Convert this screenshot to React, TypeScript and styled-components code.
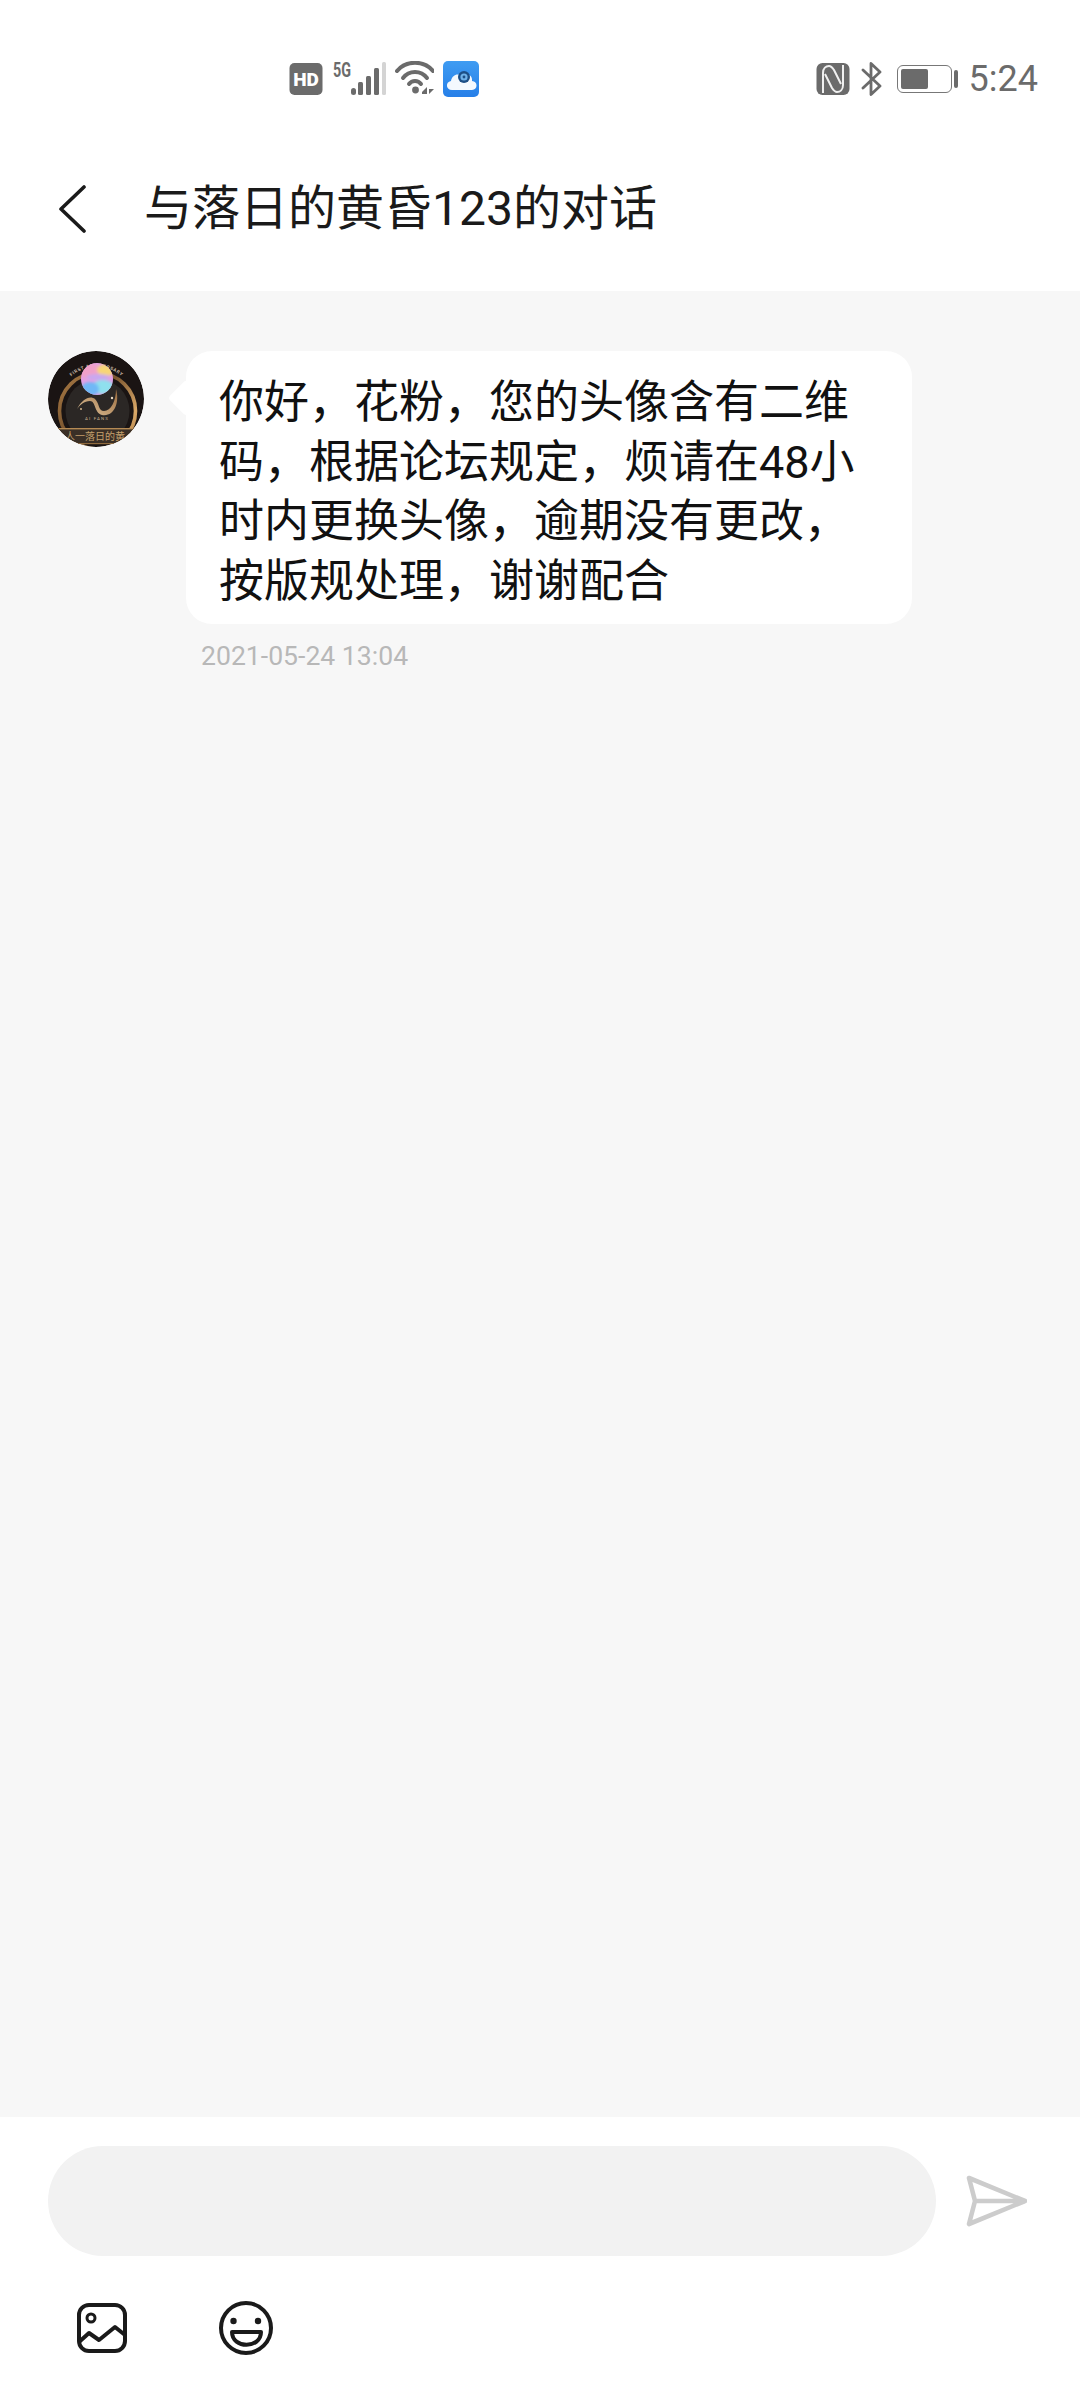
import React from 'react';
import styled, { createGlobalStyle } from 'styled-components';

const GlobalStyle = createGlobalStyle`
  html, body {
    margin: 0;
    padding: 0;
    background: #ffffff;
  }
  * {
    box-sizing: border-box;
  }
`;

const FONT = `Roboto, "Noto Sans CJK SC", sans-serif`;
const GREY = '#6b6b6b';
const INK = '#1a1a1a';

const App: React.FC = () => {
  return (
    <Screen>
      <GlobalStyle />
      <StatusBar>
        <StatusLeft>
          <svg width="34" height="34" viewBox="0 0 34 34">
            <rect x="0.5" y="1" width="33" height="32" rx="5" fill={GREY} />
            <text x="17" y="24" textAnchor="middle" fontFamily="Roboto, sans-serif" fontWeight="900" fontSize="19" fill="#fff">HD</text>
          </svg>
          <SignalIcon width="54" height="40" viewBox="0 -6 54 40">
            <text x="1" y="14.5" fontFamily="Roboto, sans-serif" fontWeight="700" fontSize="20" textLength="18" lengthAdjust="spacingAndGlyphs" fill={GREY}>5G</text>
            <rect x="19" y="26" width="5" height="7" rx="2.5" fill={GREY} />
            <rect x="26" y="20" width="5" height="13" rx="1.5" fill={GREY} />
            <rect x="34" y="14" width="5" height="19" rx="1.5" fill={GREY} />
            <rect x="42" y="6" width="5" height="27" rx="1.5" fill={GREY} />
            <rect x="50" y="0" width="4" height="33" rx="1.5" fill="#d4d4d4" />
          </SignalIcon>
          <svg width="39" height="36" viewBox="0 0 39 36">
            <g fill="none" stroke={GREY} strokeWidth="4" strokeLinecap="round">
              <path d="M2 10 C11 -1 29 -1 38 10" />
              <path d="M8 17 C14 9 26 9 32 17" />
              <path d="M14 23 C17 19 23 19 26 23" />
            </g>
            <circle cx="20.5" cy="29" r="3.4" fill={GREY} />
            <path d="M27 31 L32 26 V33 H27 Z" fill={GREY} />
            <path d="M34 25 V33 L39 28 H34 Z" fill={GREY} />
          </svg>
          <CloudIcon width="36" height="36" viewBox="0 0 36 36">
            <defs>
              <linearGradient id="cloudBg" x1="0" y1="0" x2="0" y2="1">
                <stop offset="0" stopColor="#3f9cf2" />
                <stop offset="1" stopColor="#267fe8" />
              </linearGradient>
            </defs>
            <rect width="36" height="36" rx="5" fill="url(#cloudBg)" />
            <path d="M9 29 C3 29 2 21 8 20 C9 14 15 12 18 15 C23 11 30 14 29 20 C35 20 35 29 29 29 Z" fill="#f4f9fe" />
            <circle cx="21" cy="16" r="6" fill="#1d4f86" />
            <circle cx="21" cy="16" r="3.6" fill="#6fb1e8" />
            <circle cx="21" cy="16" r="1.4" fill="#1d4f86" />
          </CloudIcon>
        </StatusLeft>
        <StatusRight>
          <svg width="34" height="34" viewBox="0 0 34 34">
            <rect x="0.5" y="1" width="33" height="32" rx="6" fill={GREY} />
            <g fill="none" stroke="#f0f0f0" strokeWidth="2" strokeLinejoin="round">
              <path d="M7 31 V11 C7 6 10 4 13 4 C15 4 16 5 18 8 L25 22" />
              <path d="M27 3 V23 C27 28 24 30 21 30 C19 30 18 29 16 26 L9 12" />
            </g>
          </svg>
          <BluetoothIcon width="22" height="34" viewBox="0 0 22 34">
            <path d="M2 8 L19 24 L10 32.5 V1.5 L19 10 L2 26" fill="none" stroke={GREY} strokeWidth="2.8" strokeLinecap="round" strokeLinejoin="round" />
          </BluetoothIcon>
          <BatteryWrap>
            <BatteryBody>
              <BatteryFill $percent={59} />
            </BatteryBody>
            <BatteryCap />
          </BatteryWrap>
          <Clock>5:24</Clock>
        </StatusRight>
      </StatusBar>

      <Header>
        <BackButton>
          <svg width="32" height="48" viewBox="0 0 32 48">
            <path d="M27 2 L4 24 L27 46" fill="none" stroke={INK} strokeWidth="3.6" strokeLinecap="round" strokeLinejoin="round" />
          </svg>
        </BackButton>
        <Title>与落日的黄昏123的对话</Title>
      </Header>

      <Conversation>
        <MessageRow>
          <Avatar>
            <svg width="96" height="96" viewBox="0 0 96 96">
              <defs>
                <clipPath id="avatarClip">
                  <circle cx="48" cy="48" r="48" />
                </clipPath>
                <clipPath id="ballClip">
                  <circle cx="49" cy="28" r="16" />
                </clipPath>
                <filter id="soft" x="-30%" y="-30%" width="160%" height="160%">
                  <feGaussianBlur stdDeviation="1.6" />
                </filter>
                <linearGradient id="ring" x1="0" y1="0" x2="1" y2="1">
                  <stop offset="0" stopColor="#a97a44" />
                  <stop offset="0.4" stopColor="#7d5730" />
                  <stop offset="0.75" stopColor="#d9a868" />
                  <stop offset="1" stopColor="#a4743e" />
                </linearGradient>
                <linearGradient id="swoosh" x1="0" y1="1" x2="1" y2="0">
                  <stop offset="0" stopColor="#e0c49c" />
                  <stop offset="1" stopColor="#9a6a3c" />
                </linearGradient>
                <path id="arcText" d="M15 36 A38 38 0 0 1 82 36" />
              </defs>
              <g clipPath="url(#avatarClip)">
                <rect width="96" height="96" fill="#1a1413" />
                <circle cx="49.5" cy="60" r="32" fill="#2b2725" />
                <circle cx="49.5" cy="60" r="38" fill="none" stroke="url(#ring)" strokeWidth="3.6" />
                <text fontFamily="Roboto, sans-serif" fontSize="4.6" fontWeight="700" letterSpacing="0.6" fill="#c9b8a4">
                  <textPath href="#arcText" startOffset="50%" textAnchor="middle">FIRST ANNIVERSARY</textPath>
                </text>
                <path d="M29 58 C34 48 42 44 47 48 C52 53 50 60 56 60 C63 60 68 50 68 38 C72 52 66 66 54 64 C46 62 48 50 42 50 C36 50 32 54 29 58 Z" fill="url(#swoosh)" />
                <circle cx="33" cy="58" r="1" fill="#d8b88c" />
                <circle cx="64" cy="47" r="1.2" fill="#e8d8c0" />
                <text x="49" y="69" textAnchor="middle" fontFamily="Roboto, sans-serif" fontSize="4.4" letterSpacing="1.2" fill="#c8b090">AI FANS</text>
                <rect x="6" y="77" width="80" height="16" fill="#3a2f26" />
                <rect x="6" y="77" width="80" height="1.4" fill="#b58a54" />
                <rect x="6" y="92" width="80" height="1.2" fill="#8f6a3e" />
                <text x="47" y="89" textAnchor="middle" fontFamily='"Noto Sans CJK SC", sans-serif' fontSize="10" fill="#c4a06c">人一落日的黄</text>
                <g clipPath="url(#ballClip)">
                  <rect x="30" y="10" width="38" height="36" fill="#e4a0e4" />
                  <g filter="url(#soft)">
                    <ellipse cx="42" cy="20" rx="10" ry="8" fill="#f0a0c8" />
                    <ellipse cx="58" cy="19" rx="9" ry="6" fill="#f8d676" />
                    <ellipse cx="50" cy="26" rx="12" ry="3" fill="#c8a8f0" />
                    <ellipse cx="55" cy="36" rx="11" ry="7" fill="#8fe0ee" />
                    <ellipse cx="42" cy="38" rx="9" ry="7" fill="#70b8f6" />
                  </g>
                </g>
              </g>
            </svg>
          </Avatar>
          <MessageColumn>
            <Bubble>你好，花粉，您的头像含有二维码，根据论坛规定，烦请在48小时内更换头像，逾期没有更改，按版规处理，谢谢配合</Bubble>
            <Timestamp>2021-05-24 13:04</Timestamp>
          </MessageColumn>
        </MessageRow>
      </Conversation>

      <Footer>
        <InputRow>
          <MessageInput />
          <svg width="62" height="52" viewBox="0 0 62 52">
            <path d="M4 3 L60 26 L4 49 L10 26 Z M10 26 H60" fill="none" stroke="#cccccc" strokeWidth="4.6" strokeLinejoin="round" strokeLinecap="round" />
          </svg>
        </InputRow>
        <ToolRow>
          <svg width="52" height="52" viewBox="0 0 52 52">
            <rect x="3" y="3" width="46" height="46" rx="10" fill="none" stroke={INK} strokeWidth="4" />
            <circle cx="15" cy="16" r="4" fill="none" stroke={INK} strokeWidth="3" />
            <path d="M3 40 L13 31 L23 38 L39 25 L49 33" fill="none" stroke={INK} strokeWidth="4" strokeLinejoin="round" />
          </svg>
          <svg width="56" height="56" viewBox="0 0 56 56">
            <circle cx="28" cy="28" r="25" fill="none" stroke={INK} strokeWidth="4" />
            <circle cx="15.5" cy="21" r="3.2" fill={INK} />
            <circle cx="40" cy="21" r="3.2" fill={INK} />
            <path d="M14 32 H43 C43 49 14 49 14 32 Z" fill="none" stroke={INK} strokeWidth="4" strokeLinejoin="round" />
          </svg>
        </ToolRow>
      </Footer>
    </Screen>
  );
};

const Screen = styled.div`
  width: 1080px;
  height: 2400px;
  display: flex;
  flex-direction: column;
  background: #ffffff;
  font-family: ${FONT};
`;

const StatusBar = styled.div`
  height: 158px;
  display: flex;
  align-items: center;
  justify-content: space-between;
  padding: 0 42px 0 289px;
`;

const StatusLeft = styled.div`
  display: flex;
  align-items: center;
  gap: 9px;
`;

const SignalIcon = styled.svg`
  margin-top: -6px;
`;

const CloudIcon = styled.svg`
  margin-top: -1px;
`;

const StatusRight = styled.div`
  display: flex;
  align-items: center;
  gap: 12px;
`;

const BluetoothIcon = styled.svg`
  margin-left: -1px;
`;

const BatteryWrap = styled.div`
  display: flex;
  align-items: center;
  gap: 2px;
  margin-left: 2px;
`;

const BatteryBody = styled.div`
  width: 55px;
  height: 28px;
  border: 1.5px solid #777777;
  border-radius: 6px;
  padding: 3px;
  display: flex;
`;

const BatteryFill = styled.div<{ $percent: number }>`
  width: ${(p) => p.$percent}%;
  background: ${GREY};
  border-radius: 2px;
`;

const BatteryCap = styled.div`
  width: 4px;
  height: 18px;
  background: ${GREY};
  border-radius: 2px;
`;

const Clock = styled.span`
  margin-left: -1px;
  font-size: 36px;
  color: ${GREY};
  line-height: 40px;
`;

const Header = styled.header`
  height: 133px;
  display: flex;
  align-items: flex-start;
  padding: 27px 0 0 57px;
`;

const BackButton = styled.div`
  width: 32px;
  height: 48px;
  display: flex;
`;

const Title = styled.h1`
  margin: -6px 0 0 55px;
  font-size: 48px;
  line-height: 60px;
  font-weight: 400;
  color: ${INK};
`;

const Conversation = styled.main`
  flex: 1;
  background: #f7f7f7;
  padding: 60px 48px 0;
`;

const MessageRow = styled.div`
  display: flex;
  align-items: flex-start;
  gap: 42px;
`;

const Avatar = styled.div`
  width: 96px;
  height: 96px;
  flex: none;
  border-radius: 50%;
  overflow: hidden;
`;

const MessageColumn = styled.div`
  width: 726px;
`;

const Bubble = styled.div`
  position: relative;
  background: #ffffff;
  border-radius: 26px;
  padding: 22px 32px 13px 33px;
  font-size: 45px;
  line-height: 59.5px;
  color: #111111;

  &::before {
    content: '';
    position: absolute;
    left: -13px;
    top: 34px;
    width: 26px;
    height: 26px;
    background: #ffffff;
    border-radius: 4px;
    transform: rotate(45deg);
  }
`;

const Timestamp = styled.div`
  margin: 16px 0 0 15px;
  font-size: 26.6px;
  line-height: 32px;
  color: #b8b8b8;
`;

const Footer = styled.footer`
  height: 283px;
  display: flex;
  flex-direction: column;
  padding: 29px 0 0 48px;
`;

const InputRow = styled.div`
  display: flex;
  align-items: center;
  gap: 29px;
`;

const MessageInput = styled.div`
  width: 888px;
  height: 110px;
  background: #f2f2f2;
  border-radius: 55px;
`;

const ToolRow = styled.div`
  display: flex;
  align-items: center;
  gap: 90px;
  margin-top: 44px;
  padding-left: 28px;
`;

export default App;
